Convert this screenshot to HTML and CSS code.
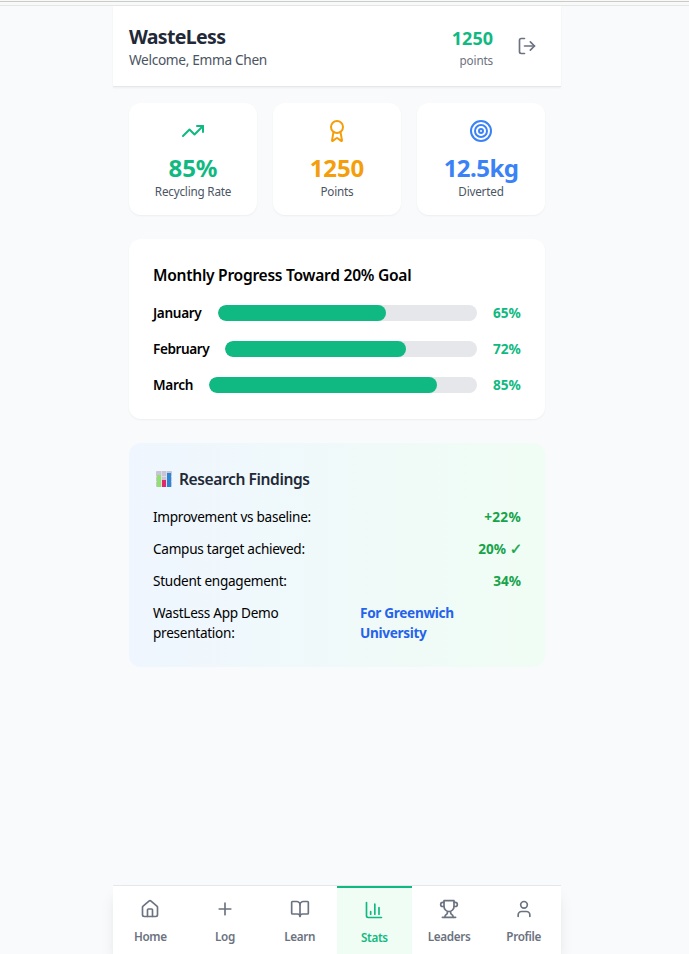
FILE: index.html
```html
<!DOCTYPE html>
<html lang="en">
<head>
<meta charset="utf-8">
<title>WasteLess</title>
<link rel="stylesheet" href="styles.css">
</head>
<body>
<div class="topline"></div>
<div class="app">
  <header class="header">
    <div>
      <h1 class="brand">WasteLess</h1>
      <p class="welcome">Welcome, Emma Chen</p>
    </div>
    <div class="account">
      <div class="balance">
        <div class="balance-value">1250</div>
        <div class="balance-label">points</div>
      </div>
      <button class="logout" aria-label="Log out">
        <svg class="icon" viewBox="0 0 24 24"><path d="M9 21H5a2 2 0 0 1-2-2V5a2 2 0 0 1 2-2h4"/><path d="m16 17 5-5-5-5"/><path d="M21 12H9"/></svg>
      </button>
    </div>
  </header>

  <main class="content">
    <section class="stats">
      <div class="stat green">
        <svg class="icon large" viewBox="0 0 24 24"><path d="M22 7 13.5 15.5 8.5 10.5 2 17"/><path d="M16 7h6v6"/></svg>
        <div class="stat-value">85%</div>
        <div class="stat-label">Recycling Rate</div>
      </div>
      <div class="stat amber">
        <svg class="icon large" viewBox="0 0 24 24"><path d="m15.477 12.89 1.515 8.526a.5.5 0 0 1-.81.47l-3.58-2.687a1 1 0 0 0-1.197 0l-3.586 2.686a.5.5 0 0 1-.81-.469l1.514-8.526"/><circle cx="12" cy="8" r="6"/></svg>
        <div class="stat-value">1250</div>
        <div class="stat-label">Points</div>
      </div>
      <div class="stat blue">
        <svg class="icon large" viewBox="0 0 24 24"><circle cx="12" cy="12" r="10"/><circle cx="12" cy="12" r="6"/><circle cx="12" cy="12" r="2"/></svg>
        <div class="stat-value">12.5kg</div>
        <div class="stat-label">Diverted</div>
      </div>
    </section>

    <section class="card">
      <h2 class="card-title">Monthly Progress Toward 20% Goal</h2>
      <div class="months">
        <div class="month"><span class="month-name january">January</span><div class="track"><div class="fill" style="width:65%"></div></div><span class="month-value">65%</span></div>
        <div class="month"><span class="month-name february">February</span><div class="track"><div class="fill" style="width:72%"></div></div><span class="month-value">72%</span></div>
        <div class="month"><span class="month-name march">March</span><div class="track"><div class="fill" style="width:85%"></div></div><span class="month-value">85%</span></div>
      </div>
    </section>

    <section class="card findings">
      <h2 class="card-title findings-title">
        <svg class="chart" viewBox="0 0 16 16"><rect width="16" height="16" rx="1" fill="#c9c3d6"/><path d="M0 5.5h16M0 10.5h16M5.5 0v16M10.5 0v16" stroke="#e4deec" stroke-width=".8"/><rect x="1" y="4" width="4" height="12" fill="#8fe36d"/><rect x="6" y="9" width="4" height="7" fill="#e0296b"/><rect x="11" y="2" width="4" height="14" fill="#2c86d6"/></svg>
        Research Findings
      </h2>
      <dl class="facts">
        <div class="fact"><dt>Improvement vs baseline:</dt><dd class="gain">+22%</dd></div>
        <div class="fact"><dt>Campus target achieved:</dt><dd>20% <span class="tick">✓</span></dd></div>
        <div class="fact"><dt>Student engagement:</dt><dd>34%</dd></div>
        <div class="fact"><dt>WastLess App Demo<br>presentation:</dt><dd class="venue">For Greenwich<br>University</dd></div>
      </dl>
    </section>
  </main>

  <nav class="nav">
    <a class="tab"><svg class="icon" viewBox="0 0 24 24"><path d="M15 21v-8a1 1 0 0 0-1-1h-4a1 1 0 0 0-1 1v8"/><path d="M3 10a2 2 0 0 1 .709-1.528l7-5.999a2 2 0 0 1 2.582 0l7 5.999A2 2 0 0 1 21 10v9a2 2 0 0 1-2 2H5a2 2 0 0 1-2-2z"/></svg>Home</a>
    <a class="tab"><svg class="icon" viewBox="0 0 24 24"><path d="M5 12h14M12 5v14"/></svg>Log</a>
    <a class="tab"><svg class="icon" viewBox="0 0 24 24"><path d="M12 7v14"/><path d="M3 18a1 1 0 0 1-1-1V4a1 1 0 0 1 1-1h5a4 4 0 0 1 4 4 4 4 0 0 1 4-4h5a1 1 0 0 1 1 1v13a1 1 0 0 1-1 1h-6a3 3 0 0 0-3 3 3 3 0 0 0-3-3z"/></svg>Learn</a>
    <a class="tab active"><svg class="icon" viewBox="0 0 24 24"><path d="M3 3v16a2 2 0 0 0 2 2h16"/><path d="M18 17V9M13 17V5M8 17v-3"/></svg>Stats</a>
    <a class="tab"><svg class="icon" viewBox="0 0 24 24"><path d="M6 9H4.5a2.5 2.5 0 0 1 0-5H6M18 9h1.5a2.5 2.5 0 0 0 0-5H18M4 22h16"/><path d="M10 14.66V17c0 .55-.47.98-.97 1.21C7.85 18.75 7 20.24 7 22M14 14.66V17c0 .55.47.98.97 1.21C16.15 18.75 17 20.24 17 22M18 2H6v7a6 6 0 0 0 12 0V2Z"/></svg>Leaders</a>
    <a class="tab"><svg class="icon" viewBox="0 0 24 24"><path d="M19 21v-2a4 4 0 0 0-4-4H9a4 4 0 0 0-4 4v2"/><circle cx="12" cy="7" r="4"/></svg>Profile</a>
  </nav>
</div>
</body>
</html>
```
FILE: styles.css
```css
* { box-sizing: border-box; margin: 0; padding: 0; }
body {
  height: 954px;
  overflow: hidden;
  display: flex;
  flex-direction: column;
  background: #f9fafb;
  color: #000;
  font-family: "Noto Sans", sans-serif;
  font-size: 13.6px;
  line-height: 20px;
  letter-spacing: -.28px;
}
.topline { flex: none; height: 6px; border-top: 1px solid #f9f9f9; border-bottom: 1px solid #e5e5e5; background: linear-gradient(#c9cdca 1px, #f9f9f9 1px); }
.app { flex: 1; min-height: 0; width: 448px; margin-left: 113px; display: flex; flex-direction: column; }
.icon { width: 20px; height: 20px; display: block; fill: none; stroke: currentColor; stroke-width: 2; stroke-linecap: round; stroke-linejoin: round; }
.icon.large { width: 24px; height: 24px; margin: 0 auto 8px; }

.header { flex: none; height: 81px; display: flex; justify-content: space-between; align-items: center; padding: 16px; background: #fff; border-bottom: 1px solid #e5e7eb; box-shadow: 0 1px 2px rgba(0,0,0,.05); }
.brand { padding-top: 1px; font-size: 19.5px; line-height: 27px; font-weight: 700; letter-spacing: -.65px; color: #1f2937; }
.welcome { font-size: 13.7px; letter-spacing: -.34px; color: #4b5563; }
.account { display: flex; align-items: center; gap: 16px; }
.balance { padding-top: 1px; text-align: right; }
.balance-value { font-size: 18px; line-height: 28px; font-weight: 700; letter-spacing: 0; color: #10b981; }
.balance-label { font-size: 11.7px; line-height: 17px; letter-spacing: -.15px; color: #6b7280; }
.logout { border: 0; background: none; padding: 8px; color: #6b7280; }

.content { flex: 1; min-height: 0; padding: 16px; display: flex; flex-direction: column; gap: 24px; }
.stats { display: grid; grid-template-columns: repeat(3, 1fr); gap: 16px; }
.stat { height: 112px; padding: 16px; border-radius: 12px; background: #fff; text-align: center; box-shadow: 0 1px 2px rgba(0,0,0,.05); }
.stat-value { padding-top: 1px; font-size: 24px; line-height: 32px; font-weight: 700; letter-spacing: -.1px; white-space: nowrap; }
.blue .stat-value { letter-spacing: -.55px; }
.stat-label { font-size: 11.7px; line-height: 14px; letter-spacing: -.2px; color: #4b5563; white-space: nowrap; }
.green { color: #10b981; }
.amber { color: #f59e0b; }
.blue { color: #3b82f6; }

.card { padding: 24px; border-radius: 12px; background: #fff; box-shadow: 0 1px 2px rgba(0,0,0,.05); }
.card-title { font-size: 15.6px; line-height: 24px; font-weight: 600; margin-bottom: 16px; white-space: nowrap; }
.months { display: flex; flex-direction: column; gap: 16px; }
.month { display: flex; align-items: center; gap: 16px; }
.month-name { font-weight: 600; letter-spacing: -.33px; white-space: nowrap; }
.january { width: 49px; }
.february { width: 56px; letter-spacing: -.42px; }
.march { width: 40px; }
.track { flex: 1; height: 16px; border-radius: 8px; background: #e5e7eb; overflow: hidden; }
.fill { height: 100%; border-radius: 8px; background: #10b981; }
.month-value { width: 28px; font-weight: 700; letter-spacing: 0; color: #10b981; }

.findings { background: linear-gradient(90deg, #eff6ff, #f0fdf4); box-shadow: none; }
.findings-title { display: flex; align-items: center; letter-spacing: -.42px; color: #1f2937; }
.chart { width: 16px; height: 16px; margin: 0 7px 0 3px; }
.facts { display: flex; flex-direction: column; gap: 12px; }
.fact { height: 20px; display: flex; justify-content: space-between; white-space: nowrap; }
.fact:last-child { height: 40px; }
.fact dd { font-weight: 700; letter-spacing: 0; color: #16a34a; }
.fact .gain { letter-spacing: .3px; }
.fact .venue { width: 161px; letter-spacing: -.32px; color: #2563eb; }
.tick { font-family: "DejaVu Sans", sans-serif; font-size: 15px; line-height: 1; font-weight: 400; letter-spacing: -1.2px; -webkit-text-stroke: .4px currentColor; }

.nav { flex: none; height: 69px; display: grid; grid-template-columns: repeat(6, 1fr); background: #fff; border-top: 1px solid #e5e7eb; box-shadow: 0 10px 15px -3px rgba(0,0,0,.1), 0 4px 6px -4px rgba(0,0,0,.1); }
.tab { display: flex; flex-direction: column; align-items: center; gap: 9px; padding-top: 13px; font-size: 11.7px; line-height: 16px; font-weight: 600; letter-spacing: -.33px; color: #6b7280; }
.tab.active { padding-top: 12px; border-top: 2px solid #10b981; background: #f0fdf4; color: #10b981; }
```
